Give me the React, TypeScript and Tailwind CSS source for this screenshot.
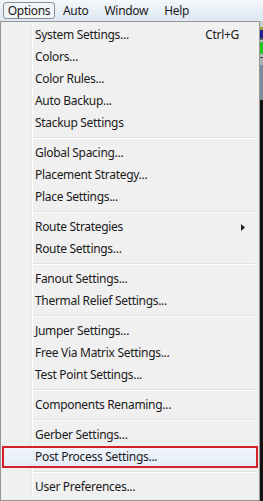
import { ReactNode } from "react";

type Entry = { label: string; shortcut?: string; submenu?: boolean; selected?: boolean } | "sep";

const entries: Entry[] = [
  { label: "System Settings...", shortcut: "Ctrl+G" },
  { label: "Colors..." },
  { label: "Color Rules..." },
  { label: "Auto Backup..." },
  { label: "Stackup Settings" },
  "sep",
  { label: "Global Spacing..." },
  { label: "Placement Strategy..." },
  { label: "Place Settings..." },
  "sep",
  { label: "Route Strategies", submenu: true },
  { label: "Route Settings..." },
  "sep",
  { label: "Fanout Settings..." },
  { label: "Thermal Relief Settings..." },
  "sep",
  { label: "Jumper Settings..." },
  { label: "Free Via Matrix Settings..." },
  { label: "Test Point Settings..." },
  "sep",
  { label: "Components Renaming..." },
  "sep",
  { label: "Gerber Settings..." },
  { label: "Post Process Settings...", selected: true },
  "sep",
  { label: "User Preferences..." },
];

export default function App() {
  return (
    <main
      className="h-[501px] w-[263px] overflow-hidden bg-[#f0f0f0] text-[12px] tracking-[-0.3px] text-[#1a1a1a]"
      style={{ fontFamily: '"Noto Sans", "Open Sans", sans-serif' }}
    >
      <header className="flex h-[21px] items-center bg-gradient-to-b from-[#f4f7fb] to-[#dde6f1] pl-[3px]">
        <MenuTitle active>Options</MenuTitle>
        <MenuTitle>Auto</MenuTitle>
        <MenuTitle>Window</MenuTitle>
        <MenuTitle>Help</MenuTitle>
      </header>

      <div className="flex h-[480px]">
        <nav className="relative w-[260px] border border-[#979797] bg-[#f0f0f0] p-[2px]">
          <div className="absolute bottom-[2px] left-[29px] top-[2px] w-[2px] border-l border-[#e2e3e3] shadow-[1px_0_0_#ffffff]" />
          {entries.map((entry, i) =>
            entry === "sep" ? (
              <div key={i} className="flex h-[8px] items-center pl-[30px] pr-[2px]">
                <div className="h-[2px] w-full border-b border-t border-b-white border-t-[#e0e0e0]" />
              </div>
            ) : (
              <Item key={i} {...entry} />
            )
          )}
        </nav>

        <div className="flex w-[3px] flex-col">
          <div className="h-[6px] bg-[#c9cdd2]" />
          <div className="h-[3px] bg-[#9ea13a]" />
          <div className="h-[8px] bg-[#1c1f8c]" />
          <div className="h-[2px] bg-[#5a5a5a]" />
          <div className="h-[2px] bg-[#c0c0c0]" />
          <div className="h-[12px] bg-[#22c322]" />
          <div className="h-[3px] bg-[#b5b8bb]" />
          <div className="h-[1px] bg-[#444]" />
          <div className="h-[7px] bg-[#a9b0b6]" />
          <div className="h-[35px] bg-[#7c8b99]" />
          <div className="flex-1 bg-[#141414]" />
        </div>
      </div>
    </main>
  );
}

function MenuTitle({ children, active }: { children: ReactNode; active?: boolean }) {
  return (
    <div
      className={
        active
          ? "flex h-[17px] w-[52px] items-center justify-center rounded-[3px] border border-[#8a9099] bg-[#f2f4f7]"
          : "flex h-[17px] items-center border border-transparent px-[7px]"
      }
    >
      {children}
    </div>
  );
}

function Item({ label, shortcut, submenu, selected }: Exclude<Entry, "sep">) {
  return (
    <div
      className={
        selected
          ? "relative -mx-[1px] flex h-[22px] items-center border-2 border-[#d42127] bg-gradient-to-b from-[#f1f6fc] to-[#e4edf9] pl-[31px] pr-[6px]"
          : "flex h-[22px] items-center pl-[32px] pr-[6px]"
      }
    >
      <span className="flex-1">{label}</span>
      {shortcut ? <span className="mr-[12px]">{shortcut}</span> : null}
      {submenu ? (
        <svg width="4" height="7" viewBox="0 0 4 7" className="mr-[6px]">
          <path d="M0 0 L4 3.5 L0 7 Z" fill="#222" />
        </svg>
      ) : null}
    </div>
  );
}
